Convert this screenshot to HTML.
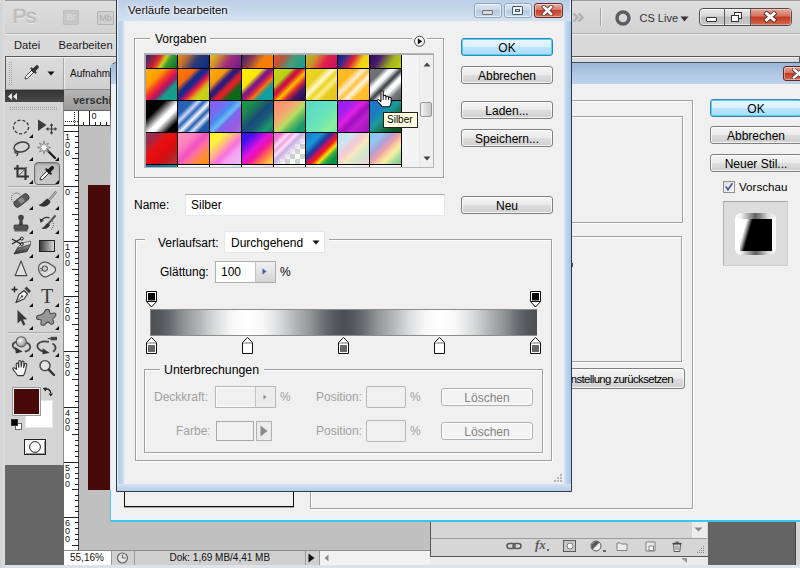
<!DOCTYPE html><html lang="de"><head><meta charset="utf-8"><title>Verläufe bearbeiten</title><style>
html,body{margin:0;padding:0;}
body{width:800px;height:568px;overflow:hidden;background:#d6d6d6;font-family:"Liberation Sans",sans-serif;font-size:12px;color:#000;}
#root{position:relative;width:800px;height:568px;overflow:hidden;}
#root div,#root svg{position:absolute;box-sizing:border-box;}
.t{white-space:nowrap;line-height:14px;}
.btn{border:1px solid #808080;border-radius:3px;background:linear-gradient(#f4f4f4 0%,#ebebeb 48%,#dddddd 52%,#cfcfcf 100%);box-shadow:inset 0 0 0 1px rgba(255,255,255,.75);text-align:center;line-height:18px;white-space:nowrap;}
.btnd{border:1px solid #adb2b5;border-radius:3px;background:#f4f4f4;box-shadow:inset 0 0 0 1px rgba(255,255,255,.8);text-align:center;line-height:18px;color:#838383;white-space:nowrap;}
.btnok{border:1px solid #3c7fb1;border-radius:3px;background:linear-gradient(#eaf6fd 0%,#d9f0fc 48%,#bee6fd 52%,#a7d9f5 100%);box-shadow:inset 0 0 0 1px #48d8fb;text-align:center;line-height:18px;white-space:nowrap;}
.fs{border:1px solid #a0a0a0;box-shadow:inset 1px 1px 0 #fff, 1px 1px 0 #fff;}
.inp{background:#fff;border:1px solid #e3e9ef;border-top-color:#abadb3;}
.gry{color:#a0a0a0;}
</style></head><body><div id="root">
<!-- Photoshop window -->
<div style="left:0px;top:0px;width:800px;height:34px;background:linear-gradient(#dedede,#d2d2d2);"></div>
<div style="left:0px;top:33px;width:800px;height:1px;background:#b4b4b4;"></div>
<div style="left:0px;top:0px;width:800px;height:1px;background:#9a9a9a;"></div>
<div style="left:0px;top:34px;width:800px;height:1px;background:#ececec;"></div>
<div class="t" style="left:12.5px;top:2.5px;font-size:21px;line-height:26px;color:#bcbcbc;-webkit-text-stroke:0.4px #bcbcbc;text-shadow:0 1px 0 #f2f2f2,0 0 1px #bcbcbc;letter-spacing:-0.5px;">Ps</div>
<div style="left:63px;top:10px;width:16px;height:15px;border:1px solid #bdbdbd;background:#c6c6c6;border-radius:1px;color:#e0e0e0;font-size:9px;line-height:13px;text-align:center;">Br</div>
<div style="left:97px;top:11px;width:17px;height:14px;border:1px solid #b4b4b4;background:#d0d0d0;border-radius:1px;color:#aaa;font-size:9px;line-height:13px;text-align:center;">Mb</div>
<div style="left:0px;top:35px;width:800px;height:22px;background:#dadada;"></div>
<div class="t" style="left:14px;top:38px;font-size:11.2px;color:#1a1a1a;">Datei</div>
<div class="t" style="left:58.5px;top:38px;font-size:11.2px;color:#1a1a1a;">Bearbeiten</div>
<div style="left:0px;top:56px;width:800px;height:35px;background:#d4d4d4;"></div>
<div style="left:5px;top:56px;width:795px;height:34px;border:1px solid #5a5a5a;border-bottom-color:#8c8c8c;background:linear-gradient(#dcdcdc,#d0d0d0);"></div>
<div style="left:6px;top:57px;width:793px;height:1px;background:#f0f0f0;"></div>
<div style="left:9px;top:62px;width:3px;height:23px;background:repeating-linear-gradient(#9a9a9a 0 1px,transparent 1px 2px);opacity:.8;width:1px;"></div>
<div style="left:11px;top:62px;width:3px;height:23px;background:repeating-linear-gradient(#9a9a9a 0 1px,transparent 1px 2px);opacity:.8;width:1px;"></div>
<svg style="left:22px;top:62px" width="20" height="20" viewBox="0 0 20 20"><path d="M3 17 L3.5 14.5 L10 8 L12 10 L5.5 16.5 Z" fill="#f4f4f4" stroke="#444" stroke-width="1"/><path d="M9.5 6.5 L13.5 10.5" stroke="#333" stroke-width="2.2" stroke-linecap="round"/><path d="M11.5 8.5 L15 5" stroke="#333" stroke-width="3.6" stroke-linecap="round"/></svg>
<svg style="left:47px;top:71px" width="8" height="5" viewBox="0 0 8 5"><path d="M0.5 0.5 L7.5 0.5 L4 4.5 Z" fill="#111"/></svg>
<div style="left:63px;top:58px;width:1px;height:31px;background:#a8a8a8;"></div>
<div style="left:64px;top:58px;width:1px;height:31px;background:#ececec;"></div>
<div class="t" style="left:70px;top:67px;font-size:10px;color:#111;">Aufnahmebereich:</div>
<div style="left:5px;top:90px;width:59px;height:12px;background:linear-gradient(#333,#4a4a4a);"></div>
<svg style="left:8px;top:93px" width="9" height="7" viewBox="0 0 9 7"><path d="M4 0 L4 7 L0 3.5 Z M9 0 L9 7 L5 3.5 Z" fill="#e8e8e8"/></svg>
<div style="left:5px;top:102px;width:59px;height:363px;background:#d4d4d4;border-right:1px solid #8c8c8c;"></div>
<div style="left:10px;top:107px;width:48px;height:3px;background:repeating-linear-gradient(90deg,#9c9c9c 0 1px,transparent 1px 2px);height:1px;"></div>
<div style="left:10px;top:109px;width:48px;height:3px;background:repeating-linear-gradient(90deg,#9c9c9c 0 1px,transparent 1px 2px);height:1px;"></div>
<div style="left:5px;top:465px;width:59px;height:100px;background:#666;"></div>
<div style="left:0px;top:565px;width:800px;height:3px;background:#dfe3e8;"></div>
<div style="left:0px;top:0px;width:5px;height:568px;background:linear-gradient(90deg,#d0d3d8,#dcdcdc);"></div>
<svg style="left:11.0px;top:116.5px" width="20" height="20" viewBox="0 0 20 20"><ellipse cx="10" cy="10" rx="7.6" ry="6.8" fill="none" stroke="#3c3c3c" stroke-width="1.3" stroke-dasharray="3.2 1.8"/></svg>
<svg style="left:29px;top:134px" width="4" height="4" viewBox="0 0 4 4"><path d="M4 0 L4 4 L0 4 Z" fill="#111"/></svg>
<svg style="left:36.0px;top:116.0px" width="22" height="20" viewBox="0 0 22 20"><path d="M2 3.5 L2 15 L10.5 9 Z" fill="#3c3c3c"/><path d="M15.5 8.5 L15.5 17.5 M11 13 L20 13" stroke="#3c3c3c" stroke-width="1.2"/><path d="M15.5 7.2 L13.6 9.7 L17.4 9.7 Z M15.5 18.8 L13.6 16.3 L17.4 16.3 Z M9.8 13 L12.3 11.1 L12.3 14.9 Z M21.2 13 L18.7 11.1 L18.7 14.9 Z" fill="#3c3c3c"/></svg>
<svg style="left:11.0px;top:139.0px" width="20" height="20" viewBox="0 0 20 20"><ellipse cx="10.5" cy="8" rx="7.6" ry="4.8" transform="rotate(-12 10.5 8)" fill="none" stroke="#3c3c3c" stroke-width="1.5"/><path d="M5 11 C3 12.5 4 14.5 6 14 C7.5 13.6 6.5 16 5.5 17" fill="none" stroke="#3c3c3c" stroke-width="1.3"/></svg>
<svg style="left:29px;top:157px" width="4" height="4" viewBox="0 0 4 4"><path d="M4 0 L4 4 L0 4 Z" fill="#111"/></svg>
<svg style="left:37.0px;top:139.5px" width="20" height="20" viewBox="0 0 20 20"><path d="M9.5 9.5 L18 18" stroke="#222" stroke-width="2.4" stroke-linecap="round"/><path d="M7 1 L8 5 L11.5 3 L9.5 6.5 L13.5 7.5 L9.5 8.5 L11.5 12 L8 10 L7 14 L6 10 L2.5 12 L4.5 8.5 L0.5 7.5 L4.5 6.5 L2.5 3 L6 5 Z" fill="#f2f2f2" stroke="#777" stroke-width="0.8"/></svg>
<svg style="left:55px;top:157px" width="4" height="4" viewBox="0 0 4 4"><path d="M4 0 L4 4 L0 4 Z" fill="#111"/></svg>
<svg style="left:10.5px;top:161.5px" width="21" height="21" viewBox="0 0 21 21"><path d="M6.5 3 L6.5 14.5 L18 14.5 M3 6.5 L14.5 6.5 L14.5 18" fill="none" stroke="#333" stroke-width="2.1"/><path d="M16 5 L8 13.4" stroke="#555" stroke-width="0.9"/></svg>
<svg style="left:29px;top:180px" width="4" height="4" viewBox="0 0 4 4"><path d="M4 0 L4 4 L0 4 Z" fill="#111"/></svg>
<div style="left:34px;top:162px;width:26px;height:23px;border:1px solid #6e6e6e;border-radius:4px;background:linear-gradient(#bdbdbd,#cacaca);box-shadow:inset 0 1px 2px rgba(0,0,0,.25);"></div>
<svg style="left:37.0px;top:163.0px" width="20" height="20" viewBox="0 0 20 20"><path d="M3 17 L3.6 14.4 L10 8 L12 10 L5.6 16.4 Z" fill="#f6f6f6" stroke="#333" stroke-width="1"/><path d="M9.3 6.3 L13.7 10.7" stroke="#222" stroke-width="2.2" stroke-linecap="round"/><path d="M11.8 8.2 L15.2 4.8" stroke="#222" stroke-width="3.8" stroke-linecap="round"/></svg>
<svg style="left:55px;top:180px" width="4" height="4" viewBox="0 0 4 4"><path d="M4 0 L4 4 L0 4 Z" fill="#111"/></svg>
<div style="left:8px;top:186px;width:53px;height:1px;background:#a6a6a6;"></div>
<div style="left:8px;top:187px;width:53px;height:1px;background:#e6e6e6;"></div>
<svg style="left:10.0px;top:189.5px" width="22" height="20" viewBox="0 0 22 20"><circle cx="6.5" cy="8" r="5" fill="none" stroke="#444" stroke-width="1" stroke-dasharray="1 1.2"/><rect x="3" y="7" width="17" height="7" rx="3.2" transform="rotate(-38 11.5 10.5)" fill="#585858" stroke="#333" stroke-width="0.8"/><rect x="9" y="8" width="5" height="5" transform="rotate(-38 11.5 10.5)" fill="#8c8c8c"/></svg>
<svg style="left:29px;top:206px" width="4" height="4" viewBox="0 0 4 4"><path d="M4 0 L4 4 L0 4 Z" fill="#111"/></svg>
<svg style="left:36.5px;top:189.5px" width="21" height="20" viewBox="0 0 21 20"><path d="M18.5 2.5 L12 10" stroke="#777" stroke-width="2.6" stroke-linecap="round"/><path d="M18.5 2.5 L12 10" stroke="#d8d8d8" stroke-width="0.9" stroke-linecap="round"/><path d="M1.5 15 C5 14.6 6.5 11 10.4 8.6 L13.6 11.8 C12 16.4 6 18.4 1.5 15 Z" fill="#333"/></svg>
<svg style="left:55px;top:206px" width="4" height="4" viewBox="0 0 4 4"><path d="M4 0 L4 4 L0 4 Z" fill="#111"/></svg>
<svg style="left:11.0px;top:212.5px" width="20" height="20" viewBox="0 0 20 20"><circle cx="10" cy="4.6" r="2.8" fill="#444"/><path d="M8.6 6 L8 12 L12 12 L11.4 6 Z" fill="#444"/><rect x="3" y="12" width="14" height="4.4" rx="1" fill="#555" stroke="#333" stroke-width="0.8"/><rect x="3.5" y="17.2" width="13" height="1.2" fill="#444"/></svg>
<svg style="left:29px;top:230px" width="4" height="4" viewBox="0 0 4 4"><path d="M4 0 L4 4 L0 4 Z" fill="#111"/></svg>
<svg style="left:36.5px;top:212.5px" width="21" height="20" viewBox="0 0 21 20"><path d="M18 3 L12 10" stroke="#555" stroke-width="2" stroke-linecap="round"/><path d="M4 15 C7.5 15 8 11.5 11 9.8 L13 12 C11.5 15.5 7.5 17 4 15 Z" fill="#333"/><path d="M4.5 8 C6 4.5 10 3.6 12.6 5" fill="none" stroke="#333" stroke-width="1.4"/><path d="M2.6 5.6 L7 7 L3.6 10 Z" fill="#333"/><path d="M15 8 C17.5 11 16.5 15 13.5 17" fill="none" stroke="#555" stroke-width="1" stroke-dasharray="1 1.2"/></svg>
<svg style="left:55px;top:230px" width="4" height="4" viewBox="0 0 4 4"><path d="M4 0 L4 4 L0 4 Z" fill="#111"/></svg>
<svg style="left:10.5px;top:236.0px" width="21" height="20" viewBox="0 0 21 20"><defs><linearGradient id="er" x1="0" y1="0" x2="0" y2="1"><stop offset="0" stop-color="#9a9a9a"/><stop offset="1" stop-color="#2a2a2a"/></linearGradient></defs><path d="M3 18 L6.5 12 L19.5 8.5 L16 15.5 Z" fill="url(#er)" stroke="#2a2a2a" stroke-width="0.8"/><path d="M6.5 12 L10 7.4 L19.5 5 L19.5 8.5 Z" fill="#dcdcdc" stroke="#444" stroke-width="0.7"/><path d="M1 3 L10 8 M1 8 L10 2.8" stroke="#222" stroke-width="1.3"/><circle cx="10.8" cy="2.6" r="1.5" fill="none" stroke="#222" stroke-width="1"/><circle cx="10.8" cy="8" r="1.5" fill="none" stroke="#222" stroke-width="1"/></svg>
<svg style="left:29px;top:254px" width="4" height="4" viewBox="0 0 4 4"><path d="M4 0 L4 4 L0 4 Z" fill="#111"/></svg>
<div style="left:39px;top:240px;width:16px;height:12px;border:1px solid #222;background:linear-gradient(90deg,#3a3a3a,#d8d8d8);"></div>
<svg style="left:55px;top:254px" width="4" height="4" viewBox="0 0 4 4"><path d="M4 0 L4 4 L0 4 Z" fill="#111"/></svg>
<svg style="left:11.0px;top:258.5px" width="20" height="20" viewBox="0 0 20 20"><path d="M10 2 L4.2 16.6 L15.8 16.6 Z" fill="#e0e0e0" stroke="#444" stroke-width="1.1" stroke-linejoin="round"/></svg>
<svg style="left:29px;top:277px" width="4" height="4" viewBox="0 0 4 4"><path d="M4 0 L4 4 L0 4 Z" fill="#111"/></svg>
<svg style="left:36.0px;top:259.0px" width="22" height="20" viewBox="0 0 22 20"><path d="M2.5 9 C2.5 4.5 7 2.5 10 3.2 C13 3.8 15 6 18 7.6 C20.5 9 20 13 17 14.6 C15 15.6 13 16.2 11.4 17.4 C8 19.4 2.5 15 2.5 9 Z" fill="#dedede" stroke="#555" stroke-width="1.2"/><circle cx="8.8" cy="9.6" r="2.6" fill="#cfcfcf" stroke="#555" stroke-width="1.1"/><path d="M4 9.6 L6 9.6 M4.4 12 L6.6 11.4" stroke="#555" stroke-width="0.9"/></svg>
<svg style="left:55px;top:277px" width="4" height="4" viewBox="0 0 4 4"><path d="M4 0 L4 4 L0 4 Z" fill="#111"/></svg>
<svg style="left:10.5px;top:285.0px" width="21" height="20" viewBox="0 0 21 20"><path d="M0.5 4.5 L6.5 4.5 M3.5 1.5 L3.5 7.5" stroke="#222" stroke-width="1.4"/><path d="M5 17.5 L8 9.5 L13 5.5 L16.5 9 L13 14 Z" fill="#f4f4f4" stroke="#333" stroke-width="1.1" stroke-linejoin="round"/><path d="M5 17.5 L10.6 11.8" stroke="#333" stroke-width="0.9"/><circle cx="11" cy="11.3" r="1.1" fill="#333"/><path d="M13.4 3.6 L15.6 1.6 L20 6 L18 8.2 Z" fill="#444"/></svg>
<svg style="left:29px;top:303px" width="4" height="4" viewBox="0 0 4 4"><path d="M4 0 L4 4 L0 4 Z" fill="#111"/></svg>
<div class="t" style="left:40px;top:285px;font-family:'Liberation Serif',serif;font-size:20px;line-height:22px;color:#3a3a3a;width:14px;text-align:center;">T</div>
<svg style="left:55px;top:303px" width="4" height="4" viewBox="0 0 4 4"><path d="M4 0 L4 4 L0 4 Z" fill="#111"/></svg>
<svg style="left:11.0px;top:308.0px" width="20" height="20" viewBox="0 0 20 20"><path d="M6.5 2 L6.5 15.5 L9.8 12.4 L12.2 17.6 L14.4 16.6 L12 11.6 L16.2 11.2 Z" fill="#3a3a3a"/></svg>
<svg style="left:29px;top:326px" width="4" height="4" viewBox="0 0 4 4"><path d="M4 0 L4 4 L0 4 Z" fill="#111"/></svg>
<svg style="left:35.12px;top:306.7px" width="23.76" height="21.6" viewBox="0 0 22 20"><path d="M9 4 C10 1.5 13.5 1.5 13.5 4.5 C13.5 6 15 6.5 16.6 5.8 C19.6 4.8 20.4 8.4 18 9.6 C16 10.6 16.4 12 17 13.2 C18 15.6 15 17 13.6 15 C12.4 13.4 11 13.8 10 15.4 C8.4 18 4.6 17.4 5.6 14.2 C6.2 12.4 5.6 11.6 4 11.6 C0.6 11.6 0.8 7.8 3.6 7.6 C6.2 7.4 8.2 6 9 4 Z" fill="#969696" stroke="#4a4a4a" stroke-width="1"/></svg>
<svg style="left:55px;top:326px" width="4" height="4" viewBox="0 0 4 4"><path d="M4 0 L4 4 L0 4 Z" fill="#111"/></svg>
<div style="left:8px;top:332px;width:53px;height:1px;background:#a6a6a6;"></div>
<div style="left:8px;top:333px;width:53px;height:1px;background:#e6e6e6;"></div>
<svg style="left:8.61px;top:334.2px" width="24.78" height="23.6" viewBox="0 0 21 20"><defs><radialGradient id="sp" cx="0.4" cy="0.35" r="0.7"><stop offset="0" stop-color="#f4f4f4"/><stop offset="1" stop-color="#8c8c8c"/></radialGradient></defs><path d="M6.2 6.6 C2 7.8 2 11.6 7 13.4 M14.4 7.2 C19.6 9 19 13.6 13.4 15" fill="none" stroke="#444" stroke-width="1.5"/><path d="M5 11 L11.6 15 L5.8 16.6 Z" fill="#333"/><circle cx="10.4" cy="6.6" r="4.3" fill="url(#sp)" stroke="#555" stroke-width="0.9"/></svg>
<svg style="left:29px;top:353px" width="4" height="4" viewBox="0 0 4 4"><path d="M4 0 L4 4 L0 4 Z" fill="#111"/></svg>
<svg style="left:34.35px;top:334.5px" width="25.3" height="23.0" viewBox="0 0 22 20"><path d="M13 6 C7 4.6 2.4 6.8 3 10 C3.4 12.4 6 13.8 9 14.6 M16 7.4 C19.4 9 19.8 12.4 16.6 14.6" fill="none" stroke="#444" stroke-width="1.5"/><path d="M7.6 11.6 L13.6 15.6 L7.4 16.8 Z" fill="#333"/><rect x="14.4" y="1.6" width="5.6" height="3" fill="#444"/><path d="M12 3.1 L14.6 3.1" stroke="#444" stroke-width="1"/><path d="M16.6 14.6 C17.6 13 18 11 17.6 9.6" stroke="#555" stroke-width="0.9" stroke-dasharray="1 1" fill="none"/></svg>
<svg style="left:55px;top:353px" width="4" height="4" viewBox="0 0 4 4"><path d="M4 0 L4 4 L0 4 Z" fill="#111"/></svg>
<svg style="left:11.0px;top:358.0px" width="20" height="20" viewBox="0 0 20 20"><path d="M5.6 11.4 L5.2 6.2 C5.1 4.8 7 4.7 7.2 6 L7.8 9.4 L7.8 3.6 C7.8 2.2 9.8 2.2 9.9 3.6 L10.2 9 L10.9 3.9 C11.1 2.6 13 2.8 12.9 4.2 L12.6 9.6 L13.8 6 C14.3 4.8 16 5.4 15.7 6.7 L14.4 12.6 C14 15 13 16.2 12.4 17.6 L6.6 17.6 C5.6 15.6 3.2 13.2 2 11.4 C1.2 10.2 2.6 9.2 3.6 10 Z" fill="#f6f6f6" stroke="#333" stroke-width="1.05" stroke-linejoin="round"/></svg>
<svg style="left:29px;top:376px" width="4" height="4" viewBox="0 0 4 4"><path d="M4 0 L4 4 L0 4 Z" fill="#111"/></svg>
<svg style="left:37.0px;top:358.0px" width="20" height="20" viewBox="0 0 20 20"><circle cx="8" cy="7.6" r="5" fill="#e2e2e2" stroke="#444" stroke-width="1.4"/><path d="M11.8 11.6 L17 17" stroke="#333" stroke-width="2.4" stroke-linecap="round"/></svg>
<div style="left:25px;top:400px;width:28px;height:28px;background:#fff;border:1px solid #e6e6e6;"></div>
<div style="left:13px;top:388px;width:27px;height:27px;background:#470a08;border:1px solid #f4f4f4;box-shadow:0 0 0 1px #9a9a9a;"></div>
<svg style="left:41.0px;top:384.5px" width="13" height="13" viewBox="0 0 13 13"><path d="M3.4 4.6 C6.4 3 9.4 4.6 9.8 8.2" fill="none" stroke="#222" stroke-width="1.4"/><path d="M1.6 3 L5.6 2.4 L4.8 6.6 Z" fill="#222"/><path d="M7.6 8.4 L12 8.4 L9.8 11.6 Z" fill="#222"/></svg>
<div style="left:15px;top:423px;width:7px;height:7px;background:#fff;border:1px solid #666;"></div>
<div style="left:11px;top:419px;width:7px;height:7px;background:#000;border:1px solid #333;"></div>
<div style="left:24px;top:439px;width:22px;height:16px;background:#fafafa;border:1px solid #222;box-shadow:inset 1px 1px 0 #fff, inset -1px -1px 0 #999;"></div>
<svg style="left:28.0px;top:440.0px" width="14" height="14" viewBox="0 0 14 14"><circle cx="7" cy="7" r="5.4" fill="#fff" stroke="#222" stroke-width="1"/></svg>
<div style="left:64px;top:90px;width:736px;height:20px;background:linear-gradient(#b8b8b8,#9e9e9e);"></div>
<div style="left:64px;top:91px;width:60px;height:19px;background:linear-gradient(#b4b4b4,#9a9a9a);"></div>
<div class="t" style="left:73px;top:93px;font-size:11px;font-weight:bold;color:#333;">verschiedene</div>
<div style="left:64px;top:110px;width:736px;height:16px;background:#fff;border-bottom:1px solid #333;border-top:1px solid #666;"></div>
<div style="left:64px;top:110px;width:15px;height:441px;background:#fff;border-right:1px solid #444;"></div>
<div style="left:79px;top:126px;width:721px;height:425px;background:#c0c0c0;"></div>
<div style="left:83px;top:122px;width:1px;height:3px;background:#222;"></div>
<div style="left:89px;top:111px;width:1px;height:14px;background:#222;"></div>
<div style="left:95px;top:122px;width:1px;height:3px;background:#222;"></div>
<div style="left:100px;top:122px;width:1px;height:3px;background:#222;"></div>
<div style="left:106px;top:122px;width:1px;height:3px;background:#222;"></div>
<div style="left:111px;top:122px;width:1px;height:3px;background:#222;"></div>
<div style="left:117px;top:120px;width:1px;height:5px;background:#222;"></div>
<div class="t" style="left:91.5px;top:111px;font-size:9px;line-height:10px;color:#111;">0</div>
<div style="left:64px;top:110px;width:15px;height:16px;background:#fff;border-right:1px solid #333;border-bottom:1px solid #333;border-top:1px solid #666;"></div>
<div style="left:65px;top:121px;width:13px;height:1px;background:repeating-linear-gradient(90deg,#222 0 1px,transparent 1px 2px);"></div>
<div style="left:74px;top:112px;width:1px;height:13px;background:repeating-linear-gradient(#222 0 1px,transparent 1px 2px);"></div>
<div style="left:64px;top:131px;width:15px;height:1px;background:#222;"></div>
<div style="left:75px;top:136px;width:4px;height:1px;background:#222;"></div>
<div style="left:75px;top:142px;width:4px;height:1px;background:#222;"></div>
<div style="left:75px;top:147px;width:4px;height:1px;background:#222;"></div>
<div style="left:75px;top:153px;width:4px;height:1px;background:#222;"></div>
<div style="left:72px;top:158px;width:7px;height:1px;background:#222;"></div>
<div style="left:75px;top:164px;width:4px;height:1px;background:#222;"></div>
<div style="left:75px;top:169px;width:4px;height:1px;background:#222;"></div>
<div style="left:75px;top:175px;width:4px;height:1px;background:#222;"></div>
<div style="left:75px;top:180px;width:4px;height:1px;background:#222;"></div>
<div style="left:64px;top:186px;width:15px;height:1px;background:#222;"></div>
<div style="left:75px;top:192px;width:4px;height:1px;background:#222;"></div>
<div style="left:75px;top:197px;width:4px;height:1px;background:#222;"></div>
<div style="left:75px;top:203px;width:4px;height:1px;background:#222;"></div>
<div style="left:75px;top:208px;width:4px;height:1px;background:#222;"></div>
<div style="left:72px;top:214px;width:7px;height:1px;background:#222;"></div>
<div style="left:75px;top:219px;width:4px;height:1px;background:#222;"></div>
<div style="left:75px;top:225px;width:4px;height:1px;background:#222;"></div>
<div style="left:75px;top:230px;width:4px;height:1px;background:#222;"></div>
<div style="left:75px;top:236px;width:4px;height:1px;background:#222;"></div>
<div style="left:64px;top:241px;width:15px;height:1px;background:#222;"></div>
<div style="left:75px;top:247px;width:4px;height:1px;background:#222;"></div>
<div style="left:75px;top:252px;width:4px;height:1px;background:#222;"></div>
<div style="left:75px;top:258px;width:4px;height:1px;background:#222;"></div>
<div style="left:75px;top:263px;width:4px;height:1px;background:#222;"></div>
<div style="left:72px;top:269px;width:7px;height:1px;background:#222;"></div>
<div style="left:75px;top:274px;width:4px;height:1px;background:#222;"></div>
<div style="left:75px;top:280px;width:4px;height:1px;background:#222;"></div>
<div style="left:75px;top:285px;width:4px;height:1px;background:#222;"></div>
<div style="left:75px;top:291px;width:4px;height:1px;background:#222;"></div>
<div style="left:64px;top:296px;width:15px;height:1px;background:#222;"></div>
<div style="left:75px;top:302px;width:4px;height:1px;background:#222;"></div>
<div style="left:75px;top:307px;width:4px;height:1px;background:#222;"></div>
<div style="left:75px;top:313px;width:4px;height:1px;background:#222;"></div>
<div style="left:75px;top:318px;width:4px;height:1px;background:#222;"></div>
<div style="left:72px;top:324px;width:7px;height:1px;background:#222;"></div>
<div style="left:75px;top:329px;width:4px;height:1px;background:#222;"></div>
<div style="left:75px;top:335px;width:4px;height:1px;background:#222;"></div>
<div style="left:75px;top:340px;width:4px;height:1px;background:#222;"></div>
<div style="left:75px;top:346px;width:4px;height:1px;background:#222;"></div>
<div style="left:64px;top:351px;width:15px;height:1px;background:#222;"></div>
<div style="left:75px;top:357px;width:4px;height:1px;background:#222;"></div>
<div style="left:75px;top:363px;width:4px;height:1px;background:#222;"></div>
<div style="left:75px;top:368px;width:4px;height:1px;background:#222;"></div>
<div style="left:75px;top:374px;width:4px;height:1px;background:#222;"></div>
<div style="left:72px;top:379px;width:7px;height:1px;background:#222;"></div>
<div style="left:75px;top:385px;width:4px;height:1px;background:#222;"></div>
<div style="left:75px;top:390px;width:4px;height:1px;background:#222;"></div>
<div style="left:75px;top:396px;width:4px;height:1px;background:#222;"></div>
<div style="left:75px;top:401px;width:4px;height:1px;background:#222;"></div>
<div style="left:64px;top:407px;width:15px;height:1px;background:#222;"></div>
<div style="left:75px;top:412px;width:4px;height:1px;background:#222;"></div>
<div style="left:75px;top:418px;width:4px;height:1px;background:#222;"></div>
<div style="left:75px;top:423px;width:4px;height:1px;background:#222;"></div>
<div style="left:75px;top:429px;width:4px;height:1px;background:#222;"></div>
<div style="left:72px;top:434px;width:7px;height:1px;background:#222;"></div>
<div style="left:75px;top:440px;width:4px;height:1px;background:#222;"></div>
<div style="left:75px;top:445px;width:4px;height:1px;background:#222;"></div>
<div style="left:75px;top:451px;width:4px;height:1px;background:#222;"></div>
<div style="left:75px;top:456px;width:4px;height:1px;background:#222;"></div>
<div style="left:64px;top:462px;width:15px;height:1px;background:#222;"></div>
<div style="left:75px;top:467px;width:4px;height:1px;background:#222;"></div>
<div style="left:75px;top:473px;width:4px;height:1px;background:#222;"></div>
<div style="left:75px;top:478px;width:4px;height:1px;background:#222;"></div>
<div style="left:75px;top:484px;width:4px;height:1px;background:#222;"></div>
<div style="left:72px;top:489px;width:7px;height:1px;background:#222;"></div>
<div style="left:75px;top:495px;width:4px;height:1px;background:#222;"></div>
<div style="left:75px;top:500px;width:4px;height:1px;background:#222;"></div>
<div style="left:75px;top:506px;width:4px;height:1px;background:#222;"></div>
<div style="left:75px;top:511px;width:4px;height:1px;background:#222;"></div>
<div style="left:64px;top:517px;width:15px;height:1px;background:#222;"></div>
<div style="left:75px;top:522px;width:4px;height:1px;background:#222;"></div>
<div style="left:75px;top:528px;width:4px;height:1px;background:#222;"></div>
<div style="left:75px;top:534px;width:4px;height:1px;background:#222;"></div>
<div style="left:75px;top:539px;width:4px;height:1px;background:#222;"></div>
<div style="left:72px;top:545px;width:7px;height:1px;background:#222;"></div>
<div class="t" style="left:65px;top:132.5px;font-size:9px;line-height:9px;color:#111;">1</div>
<div class="t" style="left:65px;top:140.5px;font-size:9px;line-height:9px;color:#111;">0</div>
<div class="t" style="left:65px;top:148.5px;font-size:9px;line-height:9px;color:#111;">0</div>
<div class="t" style="left:65px;top:188.0px;font-size:9px;line-height:9px;color:#111;">0</div>
<div class="t" style="left:65px;top:243.0px;font-size:9px;line-height:9px;color:#111;">1</div>
<div class="t" style="left:65px;top:251.0px;font-size:9px;line-height:9px;color:#111;">0</div>
<div class="t" style="left:65px;top:258.5px;font-size:9px;line-height:9px;color:#111;">0</div>
<div class="t" style="left:65px;top:298.0px;font-size:9px;line-height:9px;color:#111;">2</div>
<div class="t" style="left:65px;top:306.0px;font-size:9px;line-height:9px;color:#111;">0</div>
<div class="t" style="left:65px;top:314.0px;font-size:9px;line-height:9px;color:#111;">0</div>
<div class="t" style="left:65px;top:353.5px;font-size:9px;line-height:9px;color:#111;">3</div>
<div class="t" style="left:65px;top:361.0px;font-size:9px;line-height:9px;color:#111;">0</div>
<div class="t" style="left:65px;top:369.0px;font-size:9px;line-height:9px;color:#111;">0</div>
<div class="t" style="left:65px;top:408.5px;font-size:9px;line-height:9px;color:#111;">4</div>
<div class="t" style="left:65px;top:416.5px;font-size:9px;line-height:9px;color:#111;">0</div>
<div class="t" style="left:65px;top:424.0px;font-size:9px;line-height:9px;color:#111;">0</div>
<div class="t" style="left:65px;top:463.5px;font-size:9px;line-height:9px;color:#111;">5</div>
<div class="t" style="left:65px;top:471.5px;font-size:9px;line-height:9px;color:#111;">0</div>
<div class="t" style="left:65px;top:479.5px;font-size:9px;line-height:9px;color:#111;">0</div>
<div class="t" style="left:65px;top:519.0px;font-size:9px;line-height:9px;color:#111;">6</div>
<div class="t" style="left:65px;top:526.5px;font-size:9px;line-height:9px;color:#111;">0</div>
<div class="t" style="left:65px;top:534.5px;font-size:9px;line-height:9px;color:#111;">0</div>
<div style="left:88px;top:185px;width:30px;height:305px;background:#470a08;"></div>
<div style="left:64px;top:550px;width:736px;height:15px;background:#d0d0d0;border-top:1px solid #8a8a8a;"></div>
<div style="left:64px;top:551px;width:47px;height:14px;background:#fff;"></div>
<div class="t" style="left:70px;top:551px;font-size:10px;line-height:14px;color:#111;">55,16%</div>
<div style="left:111px;top:551px;width:1px;height:14px;background:#9a9a9a;"></div>
<div style="left:134px;top:551px;width:1px;height:14px;background:#9a9a9a;"></div>
<svg style="left:116px;top:552px" width="13" height="12" viewBox="0 0 13 12"><circle cx="6.5" cy="6" r="5" fill="#e4e4e4" stroke="#666" stroke-width="1.2"/><path d="M6.5 6 L6.5 2.5 M6.5 6 L10 6" stroke="#666" stroke-width="1.2" fill="none"/></svg>
<div class="t" style="left:169.5px;top:551px;font-size:10px;line-height:14px;color:#111;">Dok: 1,69 MB/4,41 MB</div>
<div style="left:305px;top:551px;width:1px;height:14px;background:#9a9a9a;"></div>
<svg style="left:308px;top:553px" width="7" height="10" viewBox="0 0 7 10"><path d="M0.5 0.5 L6.5 5 L0.5 9.5 Z" fill="#111"/></svg>
<div style="left:319px;top:551px;width:111px;height:14px;background:#f2f2f2;border-left:1px solid #9a9a9a;"></div>
<svg style="left:324px;top:554px" width="5" height="8" viewBox="0 0 5 8"><path d="M4.5 0.5 L0.5 4 L4.5 7.5 Z" fill="#8a8a8a"/></svg>
<div style="left:430px;top:522px;width:278px;height:35px;background:#d6d6d6;border-left:1px solid #555;border-bottom:1px solid #555;"></div>
<div style="left:431px;top:538px;width:276px;height:1px;background:#9c9c9c;"></div>
<div style="left:692px;top:522px;width:15px;height:16px;background:#ececec;"></div>
<svg style="left:694px;top:527px" width="9" height="5" viewBox="0 0 9 5"><path d="M0.5 0.5 L8.5 0.5 L4.5 4.5 Z" fill="#8a8a8a"/></svg>
<div style="left:430px;top:557px;width:278px;height:8px;background:#ebebeb;"></div>
<svg style="left:681px;top:558px" width="6" height="5" viewBox="0 0 6 5"><path d="M6 0 L6 5 L0 0 Z" fill="#999"/></svg>
<div style="left:708px;top:522px;width:87px;height:43px;background:#646464;"></div>
<div style="left:795px;top:522px;width:5px;height:43px;background:#d6d6d6;border-left:1px solid #444;"></div>
<svg style="left:506.0px;top:541.0px" width="16" height="10" viewBox="0 0 16 10"><rect x="1" y="2.5" width="8" height="5" rx="2.5" fill="none" stroke="#5a5a5a" stroke-width="1.5"/><rect x="7" y="2.5" width="8" height="5" rx="2.5" fill="none" stroke="#5a5a5a" stroke-width="1.5"/></svg>
<div class="t" style="left:535px;top:538px;font-family:'Liberation Serif',serif;font-style:italic;font-weight:bold;font-size:13px;line-height:14px;color:#5a5a5a;">fx</div>
<div style="left:547px;top:549px;width:2px;height:2px;background:#666;"></div>
<div style="left:563px;top:540px;width:13px;height:12px;background:#c8c8c8;border:1px solid #5a5a5a;"></div>
<svg style="left:565.5px;top:542.0px" width="8" height="8" viewBox="0 0 8 8"><circle cx="4" cy="4" r="3" fill="#f4f4f4" stroke="#666" stroke-width="0.8"/></svg>
<svg style="left:590.0px;top:540.0px" width="12" height="12" viewBox="0 0 12 12"><circle cx="6" cy="6" r="5" fill="#eee" stroke="#5a5a5a" stroke-width="1"/><path d="M2.5 9.5 A5 5 0 0 1 9.5 2.5 Z" fill="#5a5a5a"/></svg>
<div style="left:603px;top:550px;width:3px;height:2px;background:#666;"></div>
<svg style="left:616.0px;top:540.5px" width="12" height="11" viewBox="0 0 12 11"><path d="M1 2 L4.5 2 L5.5 3 L11 3 L11 9.5 L1 9.5 Z" fill="#ececec" stroke="#777" stroke-width="0.9"/></svg>
<svg style="left:644.5px;top:540.5px" width="11" height="11" viewBox="0 0 11 11"><path d="M1 1 L10 1 L10 10 L1 10 Z" fill="#ececec" stroke="#777" stroke-width="0.9"/><path d="M4 5 L8.5 5 L8.5 9.5 L4 9.5 Z" fill="#fff" stroke="#666" stroke-width="0.8"/></svg>
<svg style="left:671.0px;top:539.5px" width="12" height="13" viewBox="0 0 12 13"><path d="M2.5 4 L3.2 11.5 L8.8 11.5 L9.5 4 Z" fill="#e8e8e8" stroke="#555" stroke-width="1"/><path d="M1.5 3.6 L10.5 3.6" stroke="#444" stroke-width="1.4"/><path d="M4.4 2.2 L7.6 2.2" stroke="#444" stroke-width="1.2"/><path d="M5 5.5 L5 10 M7 5.5 L7 10" stroke="#666" stroke-width="0.8"/></svg>
<svg style="left:695.5px;top:544.5px" width="9" height="9" viewBox="0 0 9 9"><g fill="#888"><rect x="7" y="1" width="1" height="1"/><rect x="5" y="3" width="1" height="1"/><rect x="7" y="3" width="1" height="1"/><rect x="3" y="5" width="1" height="1"/><rect x="5" y="5" width="1" height="1"/><rect x="7" y="5" width="1" height="1"/><rect x="1" y="7" width="1" height="1"/><rect x="3" y="7" width="1" height="1"/><rect x="5" y="7" width="1" height="1"/><rect x="7" y="7" width="1" height="1"/></g></svg>
<svg style="left:573px;top:13px" width="12" height="9" viewBox="0 0 12 9"><path d="M0.5 0.5 L4.5 4.5 L0.5 8.5 M5.5 0.5 L9.5 4.5 L5.5 8.5" stroke="#b0b0b0" stroke-width="2.4" fill="none"/></svg>
<div style="left:600px;top:8px;width:1px;height:18px;background:#a4a4a4;"></div>
<div style="left:601px;top:8px;width:1px;height:18px;background:#ececec;"></div>
<svg style="left:614px;top:9px" width="18" height="18" viewBox="0 0 18 18"><circle cx="9" cy="9" r="6" fill="none" stroke="#5c5c5c" stroke-width="3.4"/></svg>
<div class="t" style="left:639.5px;top:11px;font-size:11px;color:#333;">CS Live</div>
<svg style="left:680px;top:16px" width="9" height="6" viewBox="0 0 9 6"><path d="M0.5 0.5 L8.5 0.5 L4.5 5.5 Z" fill="#333"/></svg>
<div style="left:699px;top:8px;width:93px;height:18px;border:1px solid #4e4e4e;border-radius:4px;background:linear-gradient(#ececec 0%,#d6d6d6 45%,#bebebe 50%,#c8c8c8 100%);box-shadow:inset 0 0 0 1px rgba(255,255,255,.6);"></div>
<div style="left:750px;top:9px;width:41px;height:16px;border-radius:0 3px 3px 0;background:linear-gradient(#e9a99b 0%,#d4705c 45%,#c23a22 50%,#d5664e 100%);box-shadow:inset 0 0 0 1px rgba(255,255,255,.35);"></div>
<div style="left:724px;top:9px;width:1px;height:16px;background:#5a5a5a;"></div>
<div style="left:750px;top:9px;width:1px;height:16px;background:#5a5a5a;"></div>
<div style="left:706px;top:17px;width:11px;height:5px;border:1px solid #333;background:#fff;border-radius:1px;"></div>
<div style="left:734px;top:12px;width:8px;height:7px;border:1px solid #333;background:#fff;"></div>
<div style="left:731px;top:15px;width:8px;height:7px;border:1px solid #333;background:#fff;"></div>
<svg style="left:763px;top:11px" width="15" height="12" viewBox="0 0 15 12"><path d="M3.6 2.6 L11 8.8 M11 2.6 L3.6 8.8" stroke="#5a2a24" stroke-width="4.8" stroke-linecap="square"/><path d="M3.6 2.6 L11 8.8 M11 2.6 L3.6 8.8" stroke="#fff" stroke-width="3" stroke-linecap="square"/></svg>
<!-- Ebenenstil dialog -->
<div style="left:110px;top:62px;width:700px;height:460px;background:#eef2f8;border:1px solid #58c4e6;border-top-color:#46505c;border-radius:7px 0 0 0;"></div>
<div style="left:111px;top:63px;width:699px;height:21px;background:linear-gradient(#9cb6d8,#b4cae6 60%,#bcd1eb);border-radius:6px 0 0 0;"></div>
<div style="left:118px;top:84px;width:692px;height:430px;background:#f0f0f0;"></div>
<div style="left:110px;top:520px;width:700px;height:2px;background:#3fc3ea;"></div>
<div style="left:110px;top:68px;width:1px;height:453px;background:linear-gradient(#333 0,#3a3a3a 36px,#b8c4d0 70px,#d4dde8 120px,#d4dde8 420px,#58c4e6 424px,#58c4e6 100%);"></div>
<div style="left:783px;top:66px;width:30px;height:15px;border:1px solid #5a2a24;border-radius:3px;background:linear-gradient(#e9a99b 0%,#d4705c 45%,#c23a22 50%,#d5664e 100%);box-shadow:inset 0 0 0 1px rgba(255,255,255,.4);"></div>
<svg style="left:792px;top:68px" width="13" height="11" viewBox="0 0 13 11"><path d="M2 1.5 L11 9.5 M11 1.5 L2 9.5" stroke="#444" stroke-width="4" stroke-linecap="square"/><path d="M2 1.5 L11 9.5 M11 1.5 L2 9.5" stroke="#fff" stroke-width="2.4" stroke-linecap="square"/></svg>
<div style="left:124px;top:100px;width:170px;height:407px;border:1px solid #111;box-shadow:0 0.5px 0 #555;background:#f0f0f0;"></div>
<div class="fs" style="left:310px;top:100px;width:383px;height:409px;"></div>
<div class="fs" style="left:320px;top:116px;width:363px;height:107px;"></div>
<div class="fs" style="left:320px;top:236px;width:362px;height:126px;"></div>
<div class="btn" style="left:420px;top:368px;width:265px;height:21px;"><span style='position:absolute;right:11px;top:2px;line-height:16px;font-size:11.4px;letter-spacing:-0.62px'>Auf Standardeinstellung zurücksetzen</span></div>
<div style="left:572px;top:263px;width:1px;height:4px;background:#555;"></div>
<div class="btnok" style="left:710px;top:99px;width:92px;height:18px;">OK</div>
<div class="btn" style="left:710px;top:126px;width:92px;height:18px;">Abbrechen</div>
<div class="btn" style="left:710px;top:154px;width:92px;height:18px;">Neuer Stil...</div>
<div style="left:723px;top:181px;width:12px;height:12px;background:linear-gradient(135deg,#dcdcdc,#fff);border:1px solid #8e8f8f;"></div>
<svg style="left:724px;top:182px" width="10" height="10" viewBox="0 0 10 10"><path d="M1.8 4.6 L4 7.8 L8.4 1.2" stroke="#4a5aa0" stroke-width="1.7" fill="none"/></svg>
<div class="t" style="left:739px;top:180px;font-size:11.6px;">Vorschau</div>
<div style="left:723px;top:201px;width:65px;height:65px;background:#dcdcdc;border:1px solid #cfcfcf;border-top-color:#a6a6a6;border-left-color:#b0b0b0;"></div>
<div style="left:735px;top:213px;width:41px;height:42px;border-radius:6px;background:linear-gradient(90deg,#fff 0%,#f4f4f4 14%,#9a9a9a 36%,#606060 50%,#8a8a8a 62%,#dcdcdc 80%,#fafafa 100%);"></div>
<div style="left:735px;top:218px;width:6px;height:32px;background:#fff;"></div>
<div style="left:771px;top:218px;width:5px;height:32px;background:#f8f8f8;"></div>
<svg style="left:740px;top:219px" width="32" height="32" viewBox="0 0 32 32"><defs><linearGradient id="pv" gradientUnits="userSpaceOnUse" x1="2.6" y1="14.7" x2="8.2" y2="16.3"><stop offset="0" stop-color="#fff"/><stop offset="0.45" stop-color="#9a9a9a"/><stop offset="1" stop-color="#000"/></linearGradient></defs><rect x="0" y="0" width="32" height="32" fill="url(#pv)"/></svg>
<!-- Verläufe bearbeiten dialog -->
<div style="left:116px;top:-8px;width:456px;height:500px;background:#bfd4ec;border:1px solid #2e3a48;border-radius:7px 7px 0 0;box-shadow:inset 0 0 0 1px #e4eefa;"></div>
<div style="left:118px;top:0px;width:452px;height:21px;background:linear-gradient(#bccfe6,#d4e1f1);"></div>
<div style="left:117px;top:21px;width:7px;height:470px;background:linear-gradient(90deg,#eef4fb 0,#b6cce7 2px,#c2d5ec 5px,#d6e2f2 7px);"></div>
<div style="left:564px;top:21px;width:7px;height:470px;background:linear-gradient(90deg,#dce7f4 0,#bcd2ec 3px,#a8c6ea 7px);"></div>
<div style="left:117px;top:484px;width:454px;height:7px;background:linear-gradient(#d6e2f2,#b4cdea);"></div>
<div class="t" style="left:128px;top:3px;font-size:11.5px;line-height:15px;color:#0a0a0a;text-shadow:0 0 6px #fff,0 0 3px #fff;">Verläufe bearbeiten</div>
<div style="left:124px;top:21px;width:440px;height:463px;background:#f0f0f0;border:1px solid #c9d6e6;border-color:#e8eef6;"></div>
<div style="left:474px;top:3px;width:28px;height:15px;border:1px solid #8ea4c0;border-radius:3px;background:linear-gradient(#dbe6f3 0%,#cad9ea 45%,#b8cbe2 50%,#c8d8ea 100%);box-shadow:inset 0 0 0 1px rgba(255,255,255,.6);"></div>
<div style="left:482px;top:10px;width:11px;height:5px;border:1px solid #6a7076;background:#dcdcdc;border-radius:1px;"></div>
<div style="left:504px;top:3px;width:28px;height:15px;border:1px solid #8ea4c0;border-radius:3px;background:linear-gradient(#dbe6f3 0%,#cad9ea 45%,#b8cbe2 50%,#c8d8ea 100%);box-shadow:inset 0 0 0 1px rgba(255,255,255,.6);"></div>
<div style="left:512px;top:6px;width:11px;height:9px;border:1px solid #4a5868;background:#f4f8fc;border-radius:1px;"></div>
<div style="left:515px;top:9px;width:5px;height:3px;border:1px solid #4a5868;background:#c6d7ea;"></div>
<div style="left:534px;top:3px;width:29px;height:15px;border:1px solid #6a2a22;border-radius:3px;background:linear-gradient(#e8b0a4 0%,#d67a68 45%,#c4402a 50%,#d6705a 100%);box-shadow:inset 0 0 0 1px rgba(255,255,255,.4);"></div>
<svg style="left:541px;top:5px" width="13" height="11" viewBox="0 0 13 11"><path d="M3 2 L10 9 M10 2 L3 9" stroke="#6a3030" stroke-width="4.2" stroke-linecap="square"/><path d="M3 2 L10 9 M10 2 L3 9" stroke="#fff" stroke-width="2.6" stroke-linecap="square"/></svg>
<div class="fs" style="left:134px;top:38px;width:310px;height:140px;"></div>
<div style="left:150px;top:30px;width:60px;height:16px;background:#f0f0f0;"></div>
<div class="t" style="left:155px;top:31.5px;">Vorgaben</div>
<div style="left:412px;top:32px;width:15px;height:14px;background:#f0f0f0;"></div>
<svg style="left:413px;top:35px" width="13" height="13" viewBox="0 0 13 13"><circle cx="6.5" cy="6.3" r="5" fill="#fafafa" stroke="#444" stroke-width="1"/><path d="M4.8 3.2 L9.2 6.3 L4.8 9.4 Z" fill="#111"/></svg>
<div style="left:144px;top:53px;width:290px;height:115px;background:#f4f4f4;border:1px solid #b4b4b4;box-shadow:inset 1px 1px 0 #a8a8a8;"></div>
<div style="left:146px;top:55px;width:256px;height:112px;background:#000;"></div>
<div style="left:146px;top:55px;width:31px;height:13px;background:linear-gradient(122deg,#2a2a7a 0%,#b0203a 30%,#e04020 42%,#c8d020 55%,#3a9a30 68%,#0a6a2a 100%);"></div>
<div style="left:178px;top:55px;width:31px;height:13px;background:linear-gradient(122deg,#f08a10 0%,#c07030 25%,#2a3a7a 55%,#0a2a7a 100%);"></div>
<div style="left:210px;top:55px;width:31px;height:13px;background:linear-gradient(122deg,#f0c010 0%,#d09030 25%,#a0307a 55%,#6a1a8a 100%);"></div>
<div style="left:242px;top:55px;width:31px;height:13px;background:linear-gradient(122deg,#3a1a6a 0%,#8a3a4a 30%,#f08010 60%,#ff7a00 100%);"></div>
<div style="left:274px;top:55px;width:31px;height:13px;background:linear-gradient(122deg,#e05a20 0%,#c0503a 25%,#4a9a7a 55%,#10a090 100%);"></div>
<div style="left:306px;top:55px;width:31px;height:13px;background:linear-gradient(122deg,#b0c020 0%,#d0902a 30%,#e0204a 60%,#c0106a 100%);"></div>
<div style="left:338px;top:55px;width:31px;height:13px;background:linear-gradient(122deg,#0a1a8a 0%,#3a2a8a 22%,#e0203a 45%,#f0d010 70%,#f0e010 100%);"></div>
<div style="left:370px;top:55px;width:31px;height:13px;background:linear-gradient(122deg,#2a0a5a 0%,#4a1a6a 30%,#a0b020 65%,#c0d010 100%);"></div>
<div style="left:146px;top:69px;width:31px;height:31px;background:linear-gradient(135deg,#ffb400 0%,#ff9a00 30%,#f03030 46%,#d0105a 56%,#80306a 63%,#1a9a88 72%,#10a090 100%);"></div>
<div style="left:178px;top:69px;width:31px;height:31px;background:linear-gradient(135deg,#ff7800 0%,#f56a10 28%,#1a2a8a 40%,#1a2a8a 48%,#c0106a 57%,#e8402a 63%,#e0a020 70%,#c8d418 78%,#b8d018 100%);"></div>
<div style="left:210px;top:69px;width:31px;height:31px;background:linear-gradient(135deg,#ffac00 0%,#f59a10 28%,#3a1a7a 40%,#2a1a7a 47%,#d0202a 56%,#e0202a 64%,#5a4a1a 70%,#0a6a1a 78%,#0a6a1a 100%);"></div>
<div style="left:242px;top:69px;width:31px;height:31px;background:linear-gradient(135deg,#fff000 0%,#f8e808 32%,#7a1a8a 44%,#8a1a7a 50%,#e0303a 57%,#f07a10 64%,#10a0a0 74%,#10a0a0 100%);"></div>
<div style="left:274px;top:69px;width:31px;height:31px;background:linear-gradient(135deg,#c8d818 0%,#b8d018 28%,#c0203a 38%,#d0104a 44%,#f06010 50%,#ffc000 56%,#f07010 62%,#d0203a 68%,#3a1a6a 80%,#2a0a5a 100%);"></div>
<div style="left:306px;top:69px;width:31px;height:31px;background:linear-gradient(135deg,#ecd820 0%,#e8d020 30%,#fffad0 44%,#ecd420 54%,#f8f090 64%,#e8cc20 74%,#e0c420 100%);"></div>
<div style="left:338px;top:69px;width:31px;height:31px;background:linear-gradient(135deg,#ffc020 0%,#ffb820 28%,#fff0d0 42%,#ffc040 52%,#fff4e0 62%,#ffc030 74%,#ffb820 100%);"></div>
<div style="left:370px;top:69px;width:31px;height:31px;background:linear-gradient(135deg,#707476 0%,#6c7072 22%,#ffffff 33%,#f0f0f0 40%,#4a4e50 50%,#4a4e50 53%,#ffffff 62%,#ffffff 68%,#74787a 82%,#5e6264 100%);"></div>
<div style="left:146px;top:101px;width:31px;height:31px;background:linear-gradient(135deg,#000 0%,#000 30%,#fff 54%,#fff 62%,#000 84%,#000 100%);"></div>
<div style="left:178px;top:101px;width:31px;height:31px;background:linear-gradient(135deg,#2a62b8 0%,#2a62b8 24%,#c8d8f4 34%,#2a62b8 43%,#f4f8ff 53%,#2a5eb0 63%,#dce6f8 72%,#2458a8 82%,#1e52a0 100%);"></div>
<div style="left:210px;top:101px;width:31px;height:31px;background:linear-gradient(135deg,#8a5af0 0%,#7a6af0 25%,#4a8af0 40%,#6ac0f0 52%,#7a6af0 60%,#9a5ae0 80%,#a070e8 100%);"></div>
<div style="left:242px;top:101px;width:31px;height:31px;background:linear-gradient(135deg,#1a9a4a 0%,#1a8a4a 22%,#1a4a7a 50%,#1a5a7a 64%,#1a9a6a 84%,#2a6a7a 100%);"></div>
<div style="left:274px;top:101px;width:31px;height:31px;background:linear-gradient(135deg,#ff8a6a 0%,#f89a70 24%,#f0b070 40%,#b8e060 55%,#6ac060 66%,#1a9a6a 84%,#1a9a6a 100%);"></div>
<div style="left:306px;top:101px;width:31px;height:31px;background:linear-gradient(135deg,#5ad8c0 0%,#62e0c0 40%,#70e8b0 62%,#8af0a0 80%,#7ae8a8 100%);"></div>
<div style="left:338px;top:101px;width:31px;height:31px;background:linear-gradient(135deg,#9a1af0 0%,#a020f0 24%,#e020e0 42%,#a010c0 56%,#c020d0 70%,#9a10b0 100%);"></div>
<div style="left:370px;top:101px;width:31px;height:31px;background:linear-gradient(135deg,#1a7ad0 0%,#1a7ac0 26%,#1a9aa0 46%,#1a7a5a 62%,#0a5a2a 80%,#0a4a1a 100%);"></div>
<div style="left:146px;top:133px;width:31px;height:31px;background:linear-gradient(135deg,#8a3a5a 0%,#a02a4a 18%,#e81010 40%,#e00a10 60%,#c01a1a 76%,#b03a3a 100%);"></div>
<div style="left:178px;top:133px;width:31px;height:31px;background:linear-gradient(135deg,#ff9ac0 0%,#ff80c0 28%,#f050c0 48%,#ff70a0 60%,#ff9030 80%,#ff8a10 100%);"></div>
<div style="left:210px;top:133px;width:31px;height:31px;background:linear-gradient(135deg,#fff820 0%,#fff040 24%,#ffb090 42%,#f870e0 58%,#f8a0f0 72%,#e8c0f8 100%);"></div>
<div style="left:242px;top:133px;width:31px;height:31px;background:linear-gradient(135deg,#2a10f0 0%,#4a10f0 20%,#e010e0 44%,#f01a9a 60%,#ff6a50 74%,#ffc040 90%,#ffd050 100%);"></div>
<div style="left:274px;top:133px;width:31px;height:31px;background:linear-gradient(135deg,#f060d0 0%,#f080d8 14%,#fce0f4 24%,#f0a0e0 30%,#f8e0f8 38%,#c8a8e4 46%,rgba(230,210,240,.7) 54%,rgba(200,170,230,.35) 60%,rgba(255,255,255,0) 68%,rgba(255,255,255,0) 100%),repeating-conic-gradient(#ccd6cc 0% 25%,#fff 0% 50%) 1px 1px/10px 10px;"></div>
<div style="left:306px;top:133px;width:31px;height:31px;background:linear-gradient(135deg,#1a7ad0 0%,#1a96d8 26%,#1a3a9a 40%,#c0106a 50%,#f02010 58%,#f8e010 68%,#3ab040 76%,#0a904a 86%,#0a8a4a 100%);"></div>
<div style="left:338px;top:133px;width:31px;height:31px;background:linear-gradient(135deg,#c0e0f0 0%,#d0e4f4 24%,#f4c8d8 42%,#f8e8c0 58%,#d0e8c8 74%,#f0d0e0 100%);"></div>
<div style="left:370px;top:133px;width:31px;height:31px;background:linear-gradient(135deg,#80c8f0 0%,#90c8f0 20%,#b0a0d8 36%,#f0a0a8 50%,#f8d0a0 60%,#f8f0a0 70%,#a0d8a0 86%,#80c890 100%);"></div>
<div style="left:146px;top:165px;width:31px;height:2px;background:linear-gradient(135deg,#1a6a9a 0%,#1a8aa0 100%);"></div>
<div style="left:178px;top:165px;width:31px;height:2px;background:linear-gradient(135deg,#ffffff 0%,#f0f0ff 100%);"></div>
<div style="left:210px;top:165px;width:31px;height:2px;background:linear-gradient(135deg,#fff 0%,#d0e8f8 100%);"></div>
<div style="left:242px;top:165px;width:31px;height:2px;background:linear-gradient(135deg,#fff 0%,#f8d0e8 100%);"></div>
<div style="left:274px;top:165px;width:31px;height:2px;background:linear-gradient(135deg,#fff 0%,#f4f4f4 100%);"></div>
<div style="left:306px;top:165px;width:31px;height:2px;background:linear-gradient(135deg,#fff 0%,#f8f0f0 100%);"></div>
<div style="left:338px;top:165px;width:31px;height:2px;background:linear-gradient(135deg,#fff 0%,#f8e8f0 100%);"></div>
<div style="left:370px;top:165px;width:31px;height:2px;background:linear-gradient(135deg,#fff 0%,#f0f0f0 100%);"></div>
<div style="left:419px;top:55px;width:14px;height:112px;background:#efefef;border-left:1px solid #e6e6e6;"></div>
<svg style="left:422.5px;top:61.5px" width="8" height="5" viewBox="0 0 8 5"><path d="M0.5 4.5 L4 0.5 L7.5 4.5 Z" fill="#444"/></svg>
<svg style="left:422.5px;top:156px" width="8" height="5" viewBox="0 0 8 5"><path d="M0.5 0.5 L4 4.5 L7.5 0.5 Z" fill="#444"/></svg>
<div style="left:420px;top:102px;width:12px;height:15px;border:1px solid #979797;border-radius:2px;background:linear-gradient(90deg,#f4f4f4,#dcdcdc 50%,#c8c8c8);"></div>
<svg style="left:375.5px;top:90px" width="16.5" height="17.5" viewBox="1 0 15 18.5" preserveAspectRatio="none"><path d="M5.5 1.6 C5.5 0.4 7.6 0.4 7.6 1.6 L7.6 6.4 C7.9 5.2 10 5.3 10 6.5 L10 7.2 C10.4 6.2 12.4 6.3 12.4 7.5 L12.4 8.2 C12.9 7.4 14.8 7.6 14.8 8.8 L14.8 13 C14.8 15 13.8 16 13.5 17.8 L6.5 17.8 C5.8 15.6 3.5 13.6 2.2 11.8 C1.4 10.6 2.8 9.6 3.8 10.6 L5.5 12.2 Z" fill="#fff" stroke="#111" stroke-width="1" stroke-linejoin="round"/><path d="M7.6 6.4 L7.6 10.5 M10 7.2 L10 10.5 M12.4 8.2 L12.4 10.5" stroke="#111" stroke-width="0.9"/></svg>
<div style="left:383px;top:112px;width:35px;height:16px;background:#ffffe1;border:1px solid #222;"></div>
<div class="t" style="left:387px;top:113px;font-size:10px;line-height:13px;">Silber</div>
<div class="btnok" style="left:461px;top:38px;width:92px;height:18px;">OK</div>
<div class="btn" style="left:461px;top:66px;width:92px;height:18px;">Abbrechen</div>
<div class="btn" style="left:461px;top:101px;width:92px;height:18px;">Laden...</div>
<div class="btn" style="left:461px;top:129px;width:92px;height:18px;">Speichern...</div>
<div class="btn" style="left:461px;top:196px;width:92px;height:18px;">Neu</div>
<div class="t" style="left:134px;top:198px;">Name:</div>
<div class="inp" style="left:185px;top:194px;width:260px;height:22px;"></div>
<div class="t" style="left:191px;top:198px;">Silber</div>
<div class="fs" style="left:135px;top:239px;width:417px;height:222px;"></div>
<div style="left:145px;top:232px;width:184px;height:16px;background:#f0f0f0;"></div>
<div class="t" style="left:158px;top:236px;">Verlaufsart:</div>
<div style="left:224px;top:231px;width:101px;height:22px;background:#fff;border:1px solid #e3e9ef;"></div>
<div class="t" style="left:231px;top:236px;">Durchgehend</div>
<svg style="left:312px;top:240px" width="8" height="5" viewBox="0 0 8 5"><path d="M0.5 0.5 L7.5 0.5 L4 4.5 Z" fill="#111"/></svg>
<div class="t" style="left:160px;top:265px;">Glättung:</div>
<div style="left:215px;top:261px;width:61px;height:22px;border:1px solid #abadb3;background:#fff;"></div>
<div class="t" style="left:221px;top:265px;">100</div>
<div style="left:255px;top:262px;width:20px;height:20px;background:linear-gradient(#f0f0f0,#d4d4d4);border-left:1px solid #c4c4c4;"></div>
<svg style="left:262px;top:268px" width="5" height="7" viewBox="0 0 5 7"><path d="M0.5 0.5 L4.5 3.5 L0.5 6.5 Z" fill="#4a5a9a"/></svg>
<div class="t" style="left:280px;top:265px;">%</div>
<div style="left:150px;top:309px;width:387px;height:27px;border:1px solid #8c8c8c;border-width:1px 0 1px 1px;background:linear-gradient(90deg,#4a5053 0.00%,#53595c 2.50%,#656a6d 4.75%,#929697 8.75%,#b2b5b6 12.50%,#d8d9da 16.50%,#f5f5f5 20.50%,#fcfcfc 23.00%,#fefefe 25.00%,#fcfcfc 27.00%,#f5f5f5 29.50%,#d8d9da 33.50%,#b2b5b6 37.50%,#929697 41.25%,#656a6d 45.25%,#53595c 47.50%,#4a5053 50.00%,#53595c 52.50%,#656a6d 54.75%,#929697 58.75%,#b2b5b6 62.50%,#d8d9da 66.50%,#f5f5f5 70.50%,#fcfcfc 73.00%,#fefefe 75.00%,#fcfcfc 77.00%,#f5f5f5 79.50%,#d8d9da 83.50%,#b2b5b6 87.50%,#929697 91.25%,#656a6d 95.25%,#53595c 97.50%,#4a5053 100.00%);"></div>
<svg style="left:146.0px;top:291px" width="11" height="17" viewBox="0 0 11 17"><path d="M0.5 0.5 L10.5 0.5 L10.5 10.5 L5.5 16 L0.5 10.5 Z" fill="#fff" stroke="#111" stroke-width="1"/><rect x="2" y="2" width="7" height="7" fill="#000"/><path d="M2 9.5 L9 9.5" stroke="#888" stroke-width="1"/><path d="M0.5 10.5 L10.5 10.5" stroke="#111" stroke-width="1"/></svg>
<svg style="left:530.0px;top:291px" width="11" height="17" viewBox="0 0 11 17"><path d="M0.5 0.5 L10.5 0.5 L10.5 10.5 L5.5 16 L0.5 10.5 Z" fill="#fff" stroke="#111" stroke-width="1"/><rect x="2" y="2" width="7" height="7" fill="#000"/><path d="M2 9.5 L9 9.5" stroke="#888" stroke-width="1"/><path d="M0.5 10.5 L10.5 10.5" stroke="#111" stroke-width="1"/></svg>
<svg style="left:146.0px;top:337px" width="11" height="17" viewBox="0 0 11 17"><path d="M0.5 16.5 L10.5 16.5 L10.5 5.5 L5.5 0.5 L0.5 5.5 Z" fill="#fff" stroke="#111" stroke-width="1"/><rect x="2" y="8" width="7" height="7" fill="#686868"/><path d="M1 6 L10 6" stroke="#777" stroke-width="1"/></svg>
<svg style="left:242.0px;top:337px" width="11" height="17" viewBox="0 0 11 17"><path d="M0.5 16.5 L10.5 16.5 L10.5 5.5 L5.5 0.5 L0.5 5.5 Z" fill="#fff" stroke="#111" stroke-width="1"/><rect x="2" y="8" width="7" height="7" fill="#ffffff"/><path d="M1 6 L10 6" stroke="#777" stroke-width="1"/></svg>
<svg style="left:338.0px;top:337px" width="11" height="17" viewBox="0 0 11 17"><path d="M0.5 16.5 L10.5 16.5 L10.5 5.5 L5.5 0.5 L0.5 5.5 Z" fill="#fff" stroke="#111" stroke-width="1"/><rect x="2" y="8" width="7" height="7" fill="#686868"/><path d="M1 6 L10 6" stroke="#777" stroke-width="1"/></svg>
<svg style="left:434.0px;top:337px" width="11" height="17" viewBox="0 0 11 17"><path d="M0.5 16.5 L10.5 16.5 L10.5 5.5 L5.5 0.5 L0.5 5.5 Z" fill="#fff" stroke="#111" stroke-width="1"/><rect x="2" y="8" width="7" height="7" fill="#ffffff"/><path d="M1 6 L10 6" stroke="#777" stroke-width="1"/></svg>
<svg style="left:530.0px;top:337px" width="11" height="17" viewBox="0 0 11 17"><path d="M0.5 16.5 L10.5 16.5 L10.5 5.5 L5.5 0.5 L0.5 5.5 Z" fill="#fff" stroke="#111" stroke-width="1"/><rect x="2" y="8" width="7" height="7" fill="#686868"/><path d="M1 6 L10 6" stroke="#777" stroke-width="1"/></svg>
<div class="fs" style="left:144px;top:369px;width:399px;height:84px;"></div>
<div style="left:160px;top:362px;width:104px;height:16px;background:#f0f0f0;"></div>
<div class="t" style="left:164px;top:362.5px;font-size:12.3px;">Unterbrechungen</div>
<div class="t gry" style="left:154px;top:390px;">Deckkraft:</div>
<div style="left:215px;top:386px;width:61px;height:22px;border:1px solid #b8b8b8;background:#f0f0f0;box-shadow:inset 0 0 0 1px #fafafa;"></div>
<div style="left:255px;top:387px;width:20px;height:20px;background:#ececec;border-left:1px solid #c4c4c4;"></div>
<svg style="left:263px;top:394px" width="4" height="6" viewBox="0 0 4 6"><path d="M0.5 0.5 L3.5 3 L0.5 5.5 Z" fill="#8a8a8a"/></svg>
<div class="t gry" style="left:280px;top:390px;">%</div>
<div class="t gry" style="left:316px;top:390px;">Position:</div>
<div style="left:366px;top:386px;width:40px;height:22px;border:1px solid #b8b8b8;background:#f0f0f0;border-radius:2px;"></div>
<div class="t gry" style="left:410px;top:390px;">%</div>
<div class="btnd" style="left:441px;top:388px;width:92px;height:18px;">Löschen</div>
<div class="t gry" style="left:176px;top:424px;">Farbe:</div>
<div style="left:216px;top:421px;width:38px;height:20px;border:1px solid #a8a8a8;background:#f0f0f0;"></div>
<div style="left:256px;top:421px;width:16px;height:20px;border:1px solid #b0b0b0;background:#ececec;"></div>
<svg style="left:260px;top:425px" width="8" height="12" viewBox="0 0 8 12"><path d="M0.5 0.5 L7.5 6 L0.5 11.5 Z" fill="#8a8a8a"/></svg>
<div class="t gry" style="left:316px;top:424px;">Position:</div>
<div style="left:366px;top:420px;width:40px;height:22px;border:1px solid #b8b8b8;background:#f0f0f0;border-radius:2px;"></div>
<div class="t gry" style="left:410px;top:424px;">%</div>
<div class="btnd" style="left:441px;top:422px;width:92px;height:18px;">Löschen</div>
<svg style="left:553px;top:473px" width="10" height="10" viewBox="0 0 10 10"><g fill="#b4b4b4"><rect x="7" y="1" width="2" height="2"/><rect x="4" y="4" width="2" height="2"/><rect x="7" y="4" width="2" height="2"/><rect x="1" y="7" width="2" height="2"/><rect x="4" y="7" width="2" height="2"/><rect x="7" y="7" width="2" height="2"/></g></svg>
</div></body></html>
